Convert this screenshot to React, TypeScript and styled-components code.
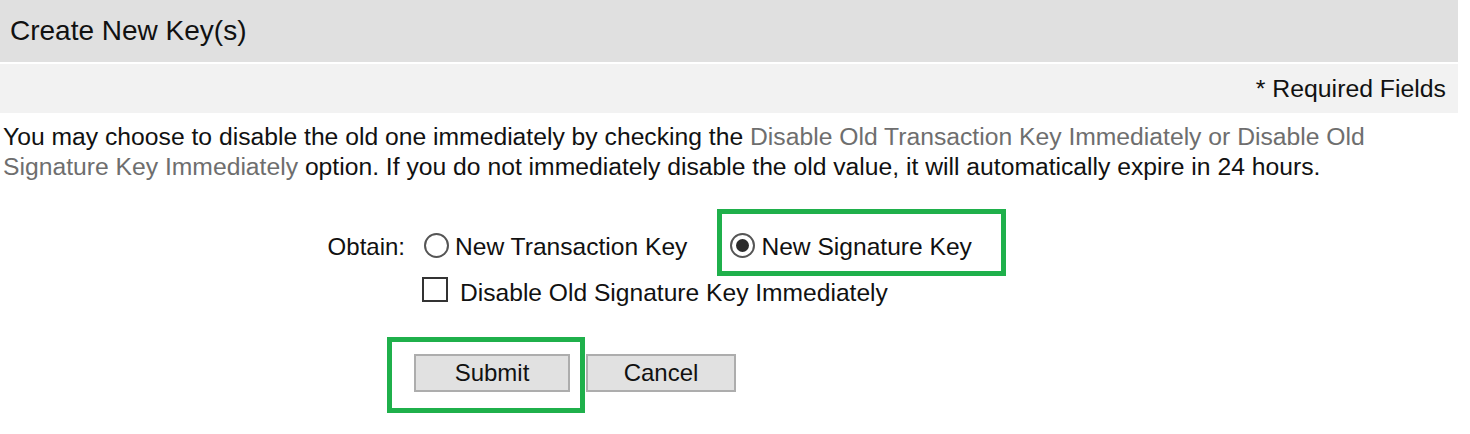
import React from "react";
import styled, { createGlobalStyle } from "styled-components";

const GlobalStyle = createGlobalStyle`
  html, body { margin: 0; padding: 0; background: #ffffff; }
  body { font-family: "Liberation Sans", Arial, sans-serif; color: #111111; }
`;

const Page = styled.div`
  width: 1458px;
  min-height: 434px;
`;

const TitleBar = styled.div`
  height: 62px;
  background: #e0e0e0;
  display: flex;
  align-items: center;
  padding-left: 10px;
  font-size: 28px;
  color: #111111;
`;

const RequiredBar = styled.div`
  margin-top: 2px;
  height: 49px;
  background: #f2f2f2;
  display: flex;
  align-items: center;
  justify-content: flex-end;
  padding-right: 12px;
  font-size: 24.8px;
`;

const Intro = styled.p`
  margin: 9px 0 0 0;
  padding-left: 3px;
  font-size: 24.7px;
  line-height: 30px;
`;

const Term = styled.span`
  color: #6e6e6e;
`;

const Form = styled.div`
  margin-top: 45px;
  display: grid;
  grid-template-columns: 405px 1fr;
  column-gap: 17px;
  font-size: 24.6px;
`;

const Label = styled.div<{ $row: number }>`
  grid-column: 1;
  grid-row: ${(p) => p.$row};
  display: flex;
  align-items: center;
  justify-content: flex-end;
  font-size: 24px;
`;

const Field = styled.div<{ $row: number; $height: number; $gap?: number }>`
  grid-column: 2;
  grid-row: ${(p) => p.$row};
  height: ${(p) => p.$height}px;
  margin-top: ${(p) => p.$gap ?? 0}px;
  display: flex;
  align-items: center;
`;

const Option = styled.label<{ $spaced?: boolean }>`
  position: relative;
  display: flex;
  align-items: center;
  height: 28px;
  margin-left: ${(p) => (p.$spaced ? "43px" : "2px")};
  gap: 6px;
`;

const RadioDot = styled.span<{ $checked?: boolean }>`
  box-sizing: border-box;
  width: 25px;
  height: 25px;
  border-radius: 50%;
  border: 2px solid #555555;
  background: #ffffff;
  display: flex;
  align-items: center;
  justify-content: center;
  margin-top: -4px;
  &::after {
    content: "";
    display: ${(p) => (p.$checked ? "block" : "none")};
    width: 13px;
    height: 13px;
    border-radius: 50%;
    background: #2b2b2b;
  }
`;

const CheckRow = styled.label`
  display: flex;
  align-items: center;
  gap: 12px;
`;

const CheckBox = styled.span`
  box-sizing: border-box;
  width: 26px;
  height: 25px;
  border: 2px solid #333333;
  background: #ffffff;
  margin-top: -4px;
`;

const CheckText = styled.span`
  margin-top: 4px;
`;

const Highlight = styled.span<{ $t: number; $r: number; $b: number; $l: number }>`
  position: absolute;
  top: ${(p) => p.$t}px;
  right: ${(p) => p.$r}px;
  bottom: ${(p) => p.$b}px;
  left: ${(p) => p.$l}px;
  border: 5px solid #1fb04b;
  pointer-events: none;
`;

const Buttons = styled.div`
  display: flex;
  gap: 16px;
  margin-left: -8px;
`;

const ButtonWrap = styled.span`
  position: relative;
  display: flex;
`;

const Button = styled.button<{ $w: number }>`
  box-sizing: border-box;
  width: ${(p) => p.$w}px;
  height: 38px;
  border: 2px solid #adadad;
  background: #e1e1e1;
  font-family: "Liberation Sans", Arial, sans-serif;
  font-size: 24px;
  color: #111111;
  padding: 0;
`;

export default function App() {
  return (
    <Page>
      <GlobalStyle />
      <TitleBar>Create New Key(s)</TitleBar>
      <RequiredBar>* Required Fields</RequiredBar>
      <Intro>
        You may choose to disable the old one immediately by checking the{" "}
        <Term>Disable Old Transaction Key Immediately or Disable Old</Term>
        <br />
        <Term>Signature Key Immediately</Term> option. If you do not immediately
        disable the old value, it will automatically expire in 24 hours.
      </Intro>
      <Form>
        <Label $row={1}>Obtain:</Label>
        <Field $row={1} $height={40}>
          <Option>
            <RadioDot />
            New Transaction Key
          </Option>
          <Option $spaced>
            <RadioDot $checked />
            New Signature Key
            <Highlight $t={-24} $r={-34} $b={-15} $l={-13} />
          </Option>
        </Field>
        <Field $row={2} $height={30} $gap={9}>
          <CheckRow>
            <CheckBox />
            <CheckText>Disable Old Signature Key Immediately</CheckText>
          </CheckRow>
        </Field>
        <Field $row={3} $height={38} $gap={48}>
          <Buttons>
            <ButtonWrap>
              <Button $w={156}>Submit</Button>
              <Highlight $t={-17} $r={-15} $b={-21} $l={-27} />
            </ButtonWrap>
            <Button $w={150}>Cancel</Button>
          </Buttons>
        </Field>
      </Form>
    </Page>
  );
}
